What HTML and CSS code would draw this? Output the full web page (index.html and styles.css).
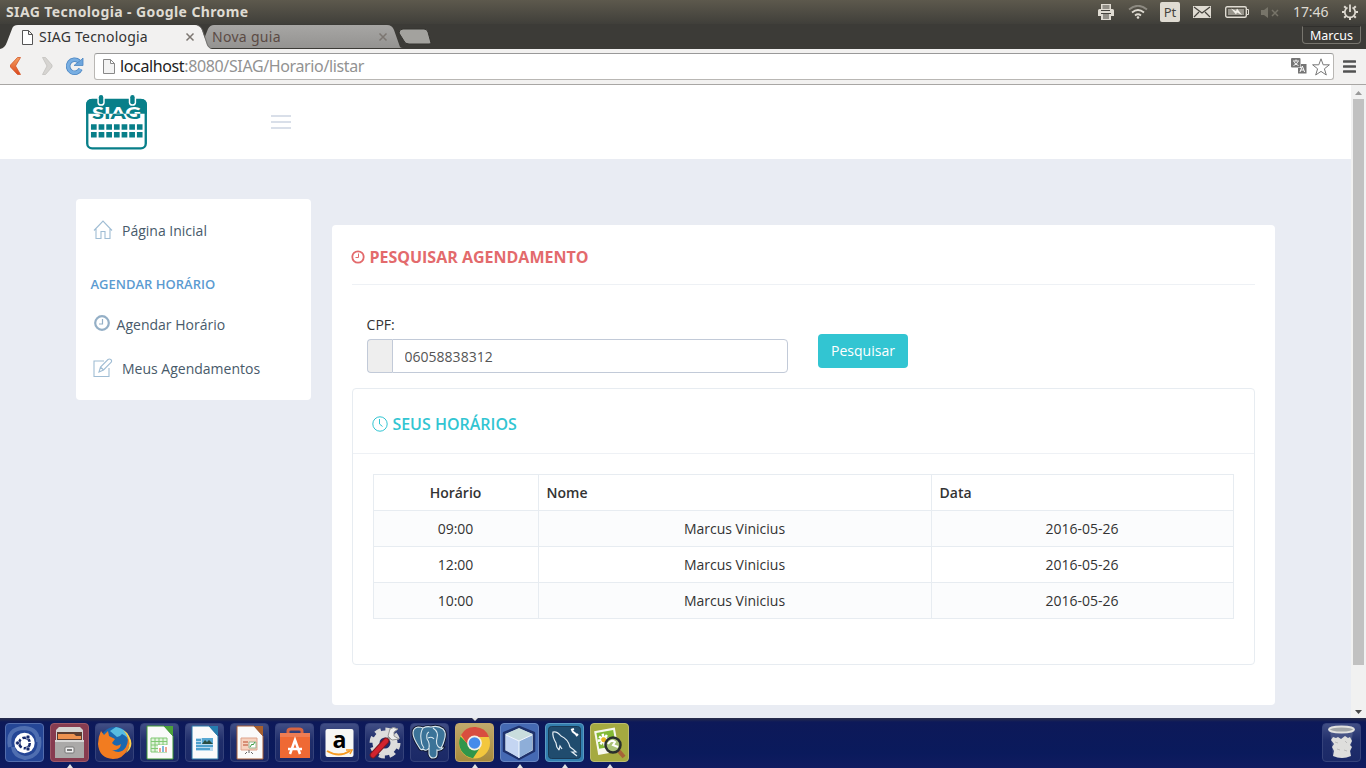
FILE: index.html
```html
<!DOCTYPE html>
<html lang="pt-BR">
<head>
<meta charset="utf-8">
<title>SIAG Tecnologia</title>
<link rel="stylesheet" href="styles.css">
</head>
<body>
<div class="desktop">
<header class="panel">
  <span class="window-title">SIAG Tecnologia - Google Chrome</span>
  <div class="indicators">
    <svg class="i-print" width="16" height="16" viewBox="0 0 16 16"><path d="M3 0h10v5h1.500q1.500 0 1.500 1.500V12h-3v4H3v-4H0V6.500Q0 5 1.500 5H3z" fill="#dfdbd2"/><path d="M4.500 2h7M4.500 4h7M3 6.500h9M5 10h6M5 12h6M5 14h6M3 9.500h10" stroke="#45433d"/></svg>
    <svg class="i-wifi" width="20" height="14" viewBox="0 0 20 14" fill="none" stroke-width="1.800"><path d="M1 4.500Q10-3 19 4.500" stroke="#8d8a81"/><path d="M4 7.500q6-5 12 0M7 10.500q3-2.500 6 0" stroke="#dfdbd2"/><circle cx="10" cy="12.500" r="1.300" fill="#dfdbd2"/></svg>
    <span class="lang">Pt</span>
    <svg class="i-mail" width="18" height="12" viewBox="0 0 18 12"><path fill="#dfdbd2" d="M0 0h18v12H0z"/><path d="M1 1l8 6 8-6M1 11l5-5M17 11l-5-5" fill="none" stroke="#45433d" stroke-width="1.200"/></svg>
    <svg class="i-batt" width="24" height="12" viewBox="0 0 24 12"><rect x=".7" y=".7" width="20.600" height="10.600" rx="1.500" fill="none" stroke="#dfdbd2" stroke-width="1.400"/><path d="M22 3.500h1.500v5H22" fill="none" stroke="#dfdbd2"/><path fill="#97948b" d="M3 3h16v6H3z"/><path d="M6 2.500l5 2.500 1-2.500 5 6.500-5-2.500-1 2z" fill="#f2efe8"/></svg>
    <svg class="i-mute" width="18" height="11" viewBox="0 0 18 11"><path d="M0 3h3l4-3v11L3 8H0z" fill="#777469"/><path d="M11 3l6 6m0-6l-6 6" stroke="#777469" stroke-width="1.500"/></svg>
    <span class="clock">17:46</span>
    <svg class="i-gear" width="16" height="16" viewBox="0 0 16 16"><g fill="none" stroke="#dfdbd2"><path d="M5.500 3.600a5.200 5.200 0 1 0 5 0" stroke-width="1.700"/><path d="M8 .5V8" stroke-width="1.800"/><path d="M0 8h2.500M13.500 8H16M2.200 2.200l1.800 1.800M13.800 2.200L12 4M2.200 13.800L4 12M13.800 13.800L12 12M8 13.500V16" stroke-width="2"/></g></svg>
  </div>
</header>

<div class="tabs">
  <svg class="tab-shapes" width="440" height="25" viewBox="0 0 440 25"><defs><linearGradient id="idle" x2="0" y2="1"><stop stop-color="#a7a6a4"/><stop offset="1" stop-color="#949391"/></linearGradient></defs><path d="M200 24l4-9 4-10q2-4 6-4h173q5 0 7 5l6 17q1 1 3 1z" fill="url(#idle)"/><path d="M399 9q0-4 4-4h21q3 0 4 3l3 11q0 1-2 1h-20q-4 0-5-3z" fill="#a3a29e" stroke="#353430"/><path d="M0 25q5-1 7-7l5-13q1-4 6-4h177q5 0 7 5l5 15q1 3 5 4z" fill="#f2f1f0"/><path d="M197 1q4 1 5.500 5l5 15q1 2 3 3" fill="none" stroke="#6b6a67" stroke-width=".8"/><path d="M22.500 6.500h6l4 4v10h-10zM28.500 6.500v4h4" fill="#fff" stroke="#555"/><path d="M186.500 9.500l7 7m0-7l-7 7M379.500 9.500l7 7m0-7l-7 7" stroke="#7c7671" stroke-width="1.500"/></svg>
  <span class="tab-name first">SIAG Tecnologia</span><span class="tab-name second">Nova guia</span>
  <span class="profile">Marcus</span>
</div>

<div class="toolbar">
  <svg class="nav" width="94" height="35" viewBox="0 49 94 35"><defs><linearGradient id="or" x2="0" y2="1"><stop stop-color="#f5a060"/><stop offset="1" stop-color="#dc481d"/></linearGradient></defs><path d="M17.500 57.500h3L15.500 66l5 8.500h-3L10.500 67v-2z" fill="url(#or)" stroke="#d35427" stroke-width=".8"/><path d="M42.500 57.500h3l6.500 7.500v2l-6.500 7.500h-3L47 66z" fill="#d6d4d1" stroke="#c3c1be" stroke-width=".8"/><path d="M79 61.500A6.500 6.500 0 1 0 80.500 69" fill="none" stroke="#4c86c2" stroke-width="4.600"/><path d="M79 61.500A6.500 6.500 0 1 0 80.500 69" fill="none" stroke="#78aee2" stroke-width="3"/><path d="M83 58v7.500h-9l3-2.500 3-2z" fill="#6da5dc" stroke="#4c86c2" stroke-width=".8"/></svg>
  <div class="address">
    <svg width="12" height="15" viewBox="0 0 12 15"><path d="M.5.500h7l4 4v10H.5zM7.500.500v4h4" fill="#f3f3f3" stroke="#888"/></svg>
    <span class="url"><b>localhost</b>:8080/SIAG/Horario/listar</span>
    <svg class="translate" width="16" height="16" viewBox="0 0 16 16"><rect width="9.500" height="9.500" rx="1" fill="#757575"/><path d="M2 3h6M5 1.500V3M3 3.500q1 3 4.500 4M7 3.500q-1 3-4.500 4" fill="none" stroke="#fff" stroke-width=".9"/><path d="M10 6h5.500v9.500H7V10h3z" fill="#757575"/><path d="M9 14l2.300-6 2.300 6M10 12h2.700" stroke="#fff" fill="none"/></svg>
    <svg width="18" height="18" viewBox="0 0 18 18"><path d="M9 .8l2.200 6h6.200l-5 4 1.900 6.200L9 13.400 3.700 17l1.900-6.200-5-4h6.200z" fill="#fff" stroke="#777" stroke-linejoin="round"/></svg>
  </div>
  <svg class="burger" width="13" height="13" viewBox="0 0 13 13"><path d="M1 1.500h11M1 6.500h11M1 11.500h11" stroke="#515151" stroke-width="2.600" stroke-linecap="round"/></svg>
</div>

<main class="viewport">
  <div class="page">
    <div class="site-header">
      <svg class="logo" width="61" height="55" viewBox="0 0 62 56"><rect x="1.200" y="5" width="59.600" height="49.300" rx="5" fill="#fff" stroke="#087f89" stroke-width="2.400"/><path d="M0 19V10q0-6 6-6h50q6 0 6 6v9z" fill="#087f89"/><rect x="11.500" y="-2" width="7.500" height="13" rx="3.700" fill="#fff"/><rect x="43.500" y="-2" width="7.500" height="13" rx="3.700" fill="#fff"/><rect x="13" y="0" width="4.500" height="9.500" rx="2.200" fill="#087f89"/><rect x="45" y="0" width="4.500" height="9.500" rx="2.200" fill="#087f89"/><clipPath id="lower"><path d="M2 19h58v8H2z"/></clipPath><g font-family="Lato, sans-serif" font-size="18" font-weight="900"><text x="6" y="24.500" textLength="50" lengthAdjust="spacingAndGlyphs" fill="#fff">SIAG</text><text x="6" y="24.500" textLength="50" lengthAdjust="spacingAndGlyphs" fill="#087f89" clip-path="url(#lower)">SIAG</text></g><g stroke="#087f89" stroke-width="5.600" stroke-dasharray="5.800 2"><path d="M5 32.500h52.500M5 40.500h52.500"/></g></svg>
      <svg class="menu-toggle" width="20" height="14" viewBox="0 0 20 14"><path d="M0 1h20M0 7h20M0 13h20" stroke="#d9dfe9" stroke-width="2"/></svg>
    </div>
    <div class="layout">
      <nav class="sidebar">
        <a class="item home"><svg width="20" height="20" viewBox="0 0 20 20" fill="none" stroke="#a0bdd4" stroke-width="1.100"><path d="M1 10.500L10 1l9 9.500M3 9v9.500h5v-7h4v7h5V9"/></svg><span>Página Inicial</span></a>
        <h3>AGENDAR HORÁRIO</h3>
        <a class="item schedule"><svg width="16" height="16" viewBox="0 0 16 16" fill="none" stroke="#94afc6"><circle cx="8" cy="8" r="6.800" stroke-width="2.200"/><path d="M8.500 4v5H5" stroke-width="1.200"/></svg><span>Agendar Horário</span></a>
        <a class="item mine"><svg width="20" height="20" viewBox="0 0 20 20" fill="none" stroke="#a0bdd4" stroke-width="1.100"><path d="M11 3H1v15.500h15V10M6 14l1.500-5L15 1.500q1.500-1 3 .2 1.200 1.300 0 2.800L10.500 12zM7.500 9l3 3"/></svg><span>Meus Agendamentos</span></a>
      </nav>
      <section class="portlet">
        <h1><svg width="14" height="14" viewBox="0 0 14 14" fill="none" stroke="#e36a6c"><circle cx="7" cy="7" r="5.700" stroke-width="1.800"/><path d="M7.500 3.500v4H4.500"/></svg><span>PESQUISAR AGENDAMENTO</span></h1>
        <form class="search" onsubmit="return false">
          <div class="field"><label for="cpf">CPF:</label><div class="group"><span class="addon"></span><input id="cpf" value="06058838312"></div></div>
          <button>Pesquisar</button>
        </form>
        <div class="results">
          <h2><svg width="16" height="16" viewBox="0 0 16 16" fill="none" stroke="#32c5d2"><circle cx="8" cy="8" r="7.200"/><path d="M7.500 3v5l3 2.500"/></svg><span>SEUS HORÁRIOS</span></h2>
          <table>
            <thead><tr><th class="c-time">Horário</th><th class="c-name">Nome</th><th>Data</th></tr></thead>
            <tbody>
              <tr><td>09:00</td><td>Marcus Vinicius</td><td>2016-05-26</td></tr>
              <tr><td>12:00</td><td>Marcus Vinicius</td><td>2016-05-26</td></tr>
              <tr><td>10:00</td><td>Marcus Vinicius</td><td>2016-05-26</td></tr>
            </tbody>
          </table>
        </div>
      </section>
    </div>
  </div>
  <div class="scrollbar"><svg width="15" height="14" viewBox="0 0 15 14"><path d="M4 10l3.500-4 3.500 4z" fill="#999"/></svg><i class="thumb"></i><svg class="down" width="15" height="14" viewBox="0 0 15 14"><path d="M4 6l3.500 4L11 6z" fill="#484848"/></svg></div>
</main>

<footer class="dock">
  <div class="tile ubuntu"><svg viewBox="0 0 39 39"><path d="M5 24Q1 5 20 5q13 1 13 14M34 14q3 19-14 21Q9 33 8 24" fill="none" stroke="#8fa9d8" stroke-width="4" opacity=".4"/><circle cx="19.500" cy="20" r="10.200" fill="#fff"/><circle cx="19.500" cy="20" r="5.300" fill="none" stroke="#16296c" stroke-width="2.500" stroke-dasharray="9 2.100"/><g fill="#16296c" stroke="#fff" stroke-width=".6"><circle cx="12.500" cy="20" r="2"/><circle cx="23" cy="14" r="2"/><circle cx="23" cy="26" r="2"/></g></svg></div>
  <div class="tile files running"><svg viewBox="0 0 39 39"><path d="M6 7l3-3h21l3 3v28H6z" fill="#d4d3d1"/><path d="M7 9h25v9H7z" fill="#5b3c31"/><path d="M8 11h16l2 2h5v3H8z" fill="#ed9150"/><path d="M5 17h29v18H5z" fill="#aaa9a8"/><path d="M5 17h29v2H5z" fill="#d8d8d7"/><rect x="15" y="24" width="9" height="6" rx="1" fill="#eee" stroke="#777"/><path d="M17 27h5" stroke="#777" stroke-width="2"/></svg></div>
  <div class="tile"><svg viewBox="0 0 39 39"><circle cx="20" cy="19" r="15" fill="#1b67af"/><path d="M21 4q12 2 14 15-3-6-8-8-2 3-5 3l-7-6z" fill="#58bce1"/><path d="M6 8l3 4 4-4 1 5 6 3-3 4q4 5 9 1-1 7-9 6 9 5 14-3 4-7-1-16 7 10 3 18-5 10-15 10Q4 35 3 21q0-7 3-13z" fill="#f27c20"/><path d="M28 7q11 12 3 23 9-7 3-17-2-4-6-6" fill="#ffd24c"/></svg></div>
  <div class="tile"><svg viewBox="0 0 39 39"><path d="M7 3h17l9 10v23H7z" fill="#fafafa" stroke="#3f9935"/><path d="M24 3h9v10z" fill="#4ba33a"/><path d="M11 15h16v14H11z" fill="#e2f3dc" stroke="#80c873"/><path d="M11 18.500h16M11 22h16M11 25.500h16M15 15v14M19 15v14M23 15v14" stroke="#80c873"/><path d="M18 22h10v7H18z" fill="#fff"/><path d="M20 29v-4M26 29v-5" stroke="#eda592" stroke-width="2"/><path d="M23 29v-6" stroke="#80b9dc" stroke-width="2"/></svg></div>
  <div class="tile"><svg viewBox="0 0 39 39"><path d="M7 3h17l9 10v23H7z" fill="#fafafa" stroke="#2879a7"/><path d="M24 3h9v10z" fill="#267eaf"/><path d="M11 15h17v13H11z" fill="#b7daef"/><path d="M11 17h5M11 20h5M11 23h17M11 26h14" stroke="#4da0cc" stroke-width="2"/><path d="M17 15h11v6H17z" fill="#58a8d2"/><path d="M17 21l3-4 2 2 2-2 4 4z" fill="#294e43"/></svg></div>
  <div class="tile"><svg viewBox="0 0 39 39"><path d="M7 3h17l9 10v23H7z" fill="#fafafa" stroke="#a75f39"/><path d="M24 3h9v10z" fill="#a85f2d"/><path d="M11 15h16v12H11z" fill="#f6d2bf" stroke="#dda28a"/><path d="M13 19h5M13 22h5" stroke="#d78e75" stroke-width="2"/><path d="M19 19h7v6h-7z" fill="#fff" stroke="#98b38f"/><path d="M20 24l2-3 1 1 2-3" stroke="#3b9c43" fill="none"/><path d="M17 29l-2 2M21 29l2 2M19 27v3" stroke="#666"/></svg></div>
  <div class="tile"><svg viewBox="0 0 39 39"><path d="M13 14V8q0-2 3-2h8q3 0 3 2v6" fill="none" stroke="#d96541" stroke-width="3"/><path d="M5 10h30v25H5z" fill="#ef6934"/><path d="M5 10h30v4H5z" fill="#ef7d53"/><path d="M15 31l5-14 5 14M13 26h14" stroke="#fff" stroke-width="2.500" fill="none"/></svg></div>
  <div class="tile"><svg viewBox="0 0 39 39"><rect x="5.500" y="6" width="28" height="28" rx="2" fill="#f7f7f5"/><text x="12.500" y="25" font-family="Open Sans, sans-serif" font-weight="bold" font-size="23" textLength="14" lengthAdjust="spacingAndGlyphs">a</text><path d="M7 28q12 7 23 0" fill="none" stroke="#f79b22" stroke-width="2"/><path d="M26 27h6l-2 4" fill="none" stroke="#f79b22" stroke-width="1.500"/></svg></div>
  <div class="tile"><svg viewBox="0 0 39 39"><circle cx="20" cy="20" r="13.500" fill="none" stroke="#d9d9d9" stroke-width="4" stroke-dasharray="6 4.600"/><circle cx="20" cy="20" r="9" fill="none" stroke="#ddd" stroke-width="7"/><path d="M16 24L26 13" stroke="#999" stroke-width="4"/><path d="M25 6l-2 7 4 4 7-1-5-3v-4l4-3q-5-3-8 0" fill="#eee" stroke="#999"/><path d="M8 32l13-14" stroke="#7e1820" stroke-width="6.500" stroke-linecap="round"/><path d="M8 32l13-14" stroke="#d3232e" stroke-width="4.500" stroke-linecap="round"/></svg></div>
  <div class="tile"><svg viewBox="0 0 39 39"><path d="M13 5q4-2 8-1 7-2 12 2 4 4 1 12-2 7-4 7h3q-2 3-6 2v4q0 4-4 4-3 0-4-4v-6q-3 4-6 1-2 2-4-2Q3 15 3 10q0-5 5-6 3 0 5 1z" fill="#3b7398" stroke="#10172e" stroke-width="3"/><path d="M13 5q4-2 8-1 7-2 12 2 4 4 1 12-2 7-4 7h3q-2 3-6 2v4q0 4-4 4-3 0-4-4v-6q-3 4-6 1-2 2-4-2Q3 15 3 10q0-5 5-6 3 0 5 1zM13 5q-3 5-2 11 0 5 3 9M23 5q6 4 4 10-2 7 3 10M19 9q-3 1-2 7 3 4 2 9M18 15q4-2 6 1" fill="#3b7398" stroke="#dae8ef" stroke-width="1.100"/></svg></div>
  <div class="tile chrome running active"><svg viewBox="0 0 39 39"><circle cx="19.500" cy="20" r="15.500" fill="#f3c73d"/><path d="M5.500 13.500A15.500 15.500 0 0 0 18 35.300l6-9-8-2z" fill="#31964a"/><path d="M6 12a15.500 15.500 0 0 1 28 2H20l-7 8z" fill="#d84d3f"/><circle cx="19.500" cy="20" r="7.400" fill="#f4f0e5"/><circle cx="19.500" cy="20" r="5.800" fill="#458bea"/></svg></div>
  <div class="tile cube running"><svg viewBox="0 0 39 39"><path d="M19 4l15 6v18l-15 8-15-8V10z" fill="#cbd8e5" stroke="#1e316c" stroke-width="2.500" stroke-linejoin="round"/><path d="M6 11l13-6 13 6-13 6z" fill="#c9dddd"/><path d="M6 12l13 6v17L6 27z" fill="#c4d5f2"/><path d="M19 18l13-6v15l-13 8z" fill="#8eaed8"/><path d="M6 12l13 6 13-6M19 18v17" stroke="#f2f8fd" fill="none"/></svg></div>
  <div class="tile mysql running"><svg viewBox="0 0 39 39"><rect x="3.500" y="3.500" width="32" height="32" rx="3" fill="#204c6e" stroke="#193955"/><path d="M14 27q-3-3-3-7-4-7-3-11 4-1 8 4 7 3 9 11 3 2 6 5l-4 0 5 4M14 27l1-4 2 3" fill="none" stroke="#e4edf3" stroke-width="1.200"/><path d="M27 8l5 4M26 7l3-1M31 13l2-2" stroke="#fff" stroke-width="2"/></svg></div>
  <div class="tile viewer running"><svg viewBox="0 0 39 39"><g transform="rotate(-10 18 18)"><path d="M6 6h21v24H6z" fill="#f7f8ed"/><path d="M8 8h17v16H8z" fill="#83b936"/><path d="M14 10v12M8 16h12M10 12l8 8M18 12l-8 8" stroke="#fff" stroke-width="2.500"/><circle cx="14" cy="16" r="2.500" fill="#e6b522"/></g><path d="M28 27l6 7" stroke="#a66338" stroke-width="4"/><circle cx="23" cy="22" r="7.500" fill="#a9c276" stroke="#292f2d" stroke-width="2.500"/><path d="M18 21q3-5 7-2l-2 3 5 2" fill="none" stroke="#fff" stroke-width="2"/></svg></div>
  <div class="tile trash"><svg viewBox="0 0 39 39"><path d="M8 8l3 25q8 4 17 0l3-25z" fill="#aeb8c9" fill-opacity=".22"/><path d="M9 17l2-3 3 1 2-1 3 2 4-3 3 2 2-1 2 4-2 4 2 2-2 4 1 5q-9 4-18 0l1-5-2-4 2-3z" fill="#dededc"/><path d="M13 19l3 1M15 26l3 1M23 18l2 2M22 27l3 1" fill="none" stroke="#bbb"/><ellipse cx="19.500" cy="6.500" rx="12.500" ry="3" fill="#a2a6a9" stroke="#e1e1df" stroke-width="2"/></svg></div>
</footer>
</div>
</body>
</html>
```
FILE: styles.css
```css
* { box-sizing: border-box; }
body { margin: 0; overflow: hidden; font-family: "Open Sans", "Noto Sans", sans-serif; font-size: 14px; color: #333; }
svg { display: block; flex: none; }
.desktop { width: 1366px; height: 768px; display: flex; flex-direction: column; }

/* Window frame */
.panel { height: 24px; display: flex; align-items: center; justify-content: space-between; padding: 0 8px 0 6px; background: linear-gradient(#5d594d, #403f3a); color: #dfdbd2; font-family: "Noto Sans", sans-serif; }
.window-title { font-size: 14px; font-weight: bold; letter-spacing: .39px; line-height: 24px; white-space: nowrap; }
.indicators { display: flex; align-items: center; height: 24px; }
.i-wifi { margin-left: 14px; }
.lang { margin-left: 12px; width: 20px; height: 20px; border-radius: 2px; background: #dfdbd2; color: #45433e; font-size: 13px; line-height: 20px; text-align: center; }
.i-mail { margin-left: 13px; }
.i-batt { margin-left: 14px; }
.i-mute { margin-left: 12px; }
.clock { margin-left: 14px; width: 37px; font-size: 14px; letter-spacing: -.1px; line-height: 24px; height: 24px; white-space: nowrap; }
.i-gear { margin-left: 12px; }
.tabs { height: 25px; display: flex; background: #3c3b37; position: relative; font-family: "Noto Sans", sans-serif; }
.tab-name { position: absolute; top: 3px; font-size: 14px; line-height: 20px; white-space: nowrap; }
.first { left: 39px; color: #333; letter-spacing: .22px; }
.second { left: 212px; color: #5b4b45; letter-spacing: .3px; }
.profile { margin: 2px 5px 0 auto; width: 59px; height: 18px; border: 1px solid #77756e; border-top-color: #302f2c; border-radius: 0 0 4px 4px; color: #fff; font-size: 12.5px; line-height: 17px; text-align: center; }
.toolbar { height: 36px; display: flex; background: #f2f1f0; border-bottom: 1px solid #a8a6a4; }
.address { width: 1240px; height: 27px; margin-top: 4px; display: flex; align-items: center; padding: 0 3px 0 8px; background: #fff; border: 1px solid #b9b7b4; border-top-color: #999; border-radius: 3px; }
.url { margin: -2px 0 0 5px; font: 16px/24px "Noto Sans", sans-serif; letter-spacing: -.37px; color: #929292; white-space: nowrap; }
.url b { font-weight: normal; color: #222; }
.translate { margin: -1px 5px 0 auto; }
.burger { margin: 11px 0 0 9px; }

/* Site */
.viewport { height: 633px; display: flex; }
.page { width: 1351px; background: #e9ecf3; }
.site-header { height: 74px; background: #fff; display: flex; padding: 10px 0 0 86px; }
.menu-toggle { margin: 20px 0 0 124px; }
.layout { display: flex; gap: 21px; padding: 40px 0 0 76px; }
.sidebar { width: 235px; height: 201px; padding-top: 10px; background: #fff; border-radius: 4px; }
.item { height: 42px; display: flex; align-items: center; padding-left: 17px; gap: 9px; color: #485a6a; white-space: nowrap; }
.schedule { height: 44px; padding-left: 18px; gap: 6.6px; }
.schedule svg { margin-top: -2px; }
.mine { height: 44px; }
.sidebar h3 { margin: 22px 0 6px; padding-left: 14.5px; font-size: 13px; line-height: 23px; font-weight: 600; color: #5b9bd1; }
.portlet { width: 943px; height: 480px; margin-top: 26px; padding: 12px 20px 0; background: #fff; border-radius: 4px; }
.portlet h1 { height: 48px; margin: 0; padding-bottom: 7px; display: flex; align-items: center; gap: 4.4px; border-bottom: 1px solid #eef1f5; font-size: 16px; font-weight: 700; color: #e36a6c; }
.portlet h1 svg { margin-left: -1px; }
.search { display: flex; padding: 30px 0 0 15px; height: 103px; }
.field { width: 421px; }
.field label { display: block; height: 24px; line-height: 20px; margin-left: -.4px; }
.group { display: flex; height: 34px; }
.addon { width: 25px; background: #eee; border: 1px solid #c2cad8; border-right: 0; border-radius: 4px 0 0 4px; }
.group input { width: 396px; padding: 6px 11.6px; border: 1px solid #c2cad8; border-radius: 0 4px 4px 0; font: inherit; color: #555; outline: none; }
.search button { width: 90px; height: 34px; margin: 19px 0 0 30px; padding: 0 0 2px; border: 0; border-radius: 4px; background: #32c5d2; color: #fff; font: inherit; }
.results { height: 277px; border: 1px solid #e7ecf1; border-radius: 4px; }
.results h2 { height: 65px; margin: 0 0 20px; padding: 5px 19px 0; display: flex; align-items: center; gap: 4.4px; border-bottom: 1px solid #eef1f5; color: #32c5d2; font-size: 16px; font-weight: 600; }
table { width: 861px; margin-left: 20px; border-collapse: collapse; table-layout: fixed; }
th, td { height: 36px; padding: 0 8px 0 7px; border: 1px solid #e7ecf1; text-align: center; font-weight: normal; }
th { padding-left: 7.6px; font-weight: 600; text-align: left; }
.c-time { width: 165px; padding-left: 7px; text-align: center; }
.c-name { width: 393px; }
tbody tr:nth-child(odd) { background: #fbfcfd; }
.scrollbar { width: 15px; display: flex; flex-direction: column; background: #f1f1f1; }
.thumb { width: 11px; height: 566px; margin-left: 2px; background: #c1c1c1; }
.down { margin-top: auto; }

/* Dock */
.dock { height: 50px; display: flex; gap: 6px; padding: 5px 5px 0; background: linear-gradient(#292d49, #0d1959 4px, #0a1a5c 70%, #101b60); }
.tile { position: relative; width: 39px; height: 39px; border: 1px solid #35427a; border-radius: 4px; background: linear-gradient(#414e85, #202e6b 45%, #1b2967); }
.tile svg { width: 39px; height: 39px; margin: -1px; }
.ubuntu { background: #254696; border-color: #536dad; }
.files { background: #873c50; border-color: #9e5868; }
.chrome { background: linear-gradient(#c0a96c, #a88b3d); border-color: #c2a769; }
.cube { background: #4569b3; border-color: #6886c1; }
.mysql { background: #327eae; border-color: #5b9ac1; }
.viewer { background: #a5aa40; border-color: #bcbc70; }
.trash { margin-left: auto; }
.running::after, .active::before { content: ""; position: absolute; left: 16px; border: 3px solid transparent; }
.running::after { bottom: -7px; border-bottom: 4px solid #e2e2e2; border-top: 0; }
.active::before { top: -6px; border-top: 3px solid #e2e2e2; border-bottom: 0; }
```
